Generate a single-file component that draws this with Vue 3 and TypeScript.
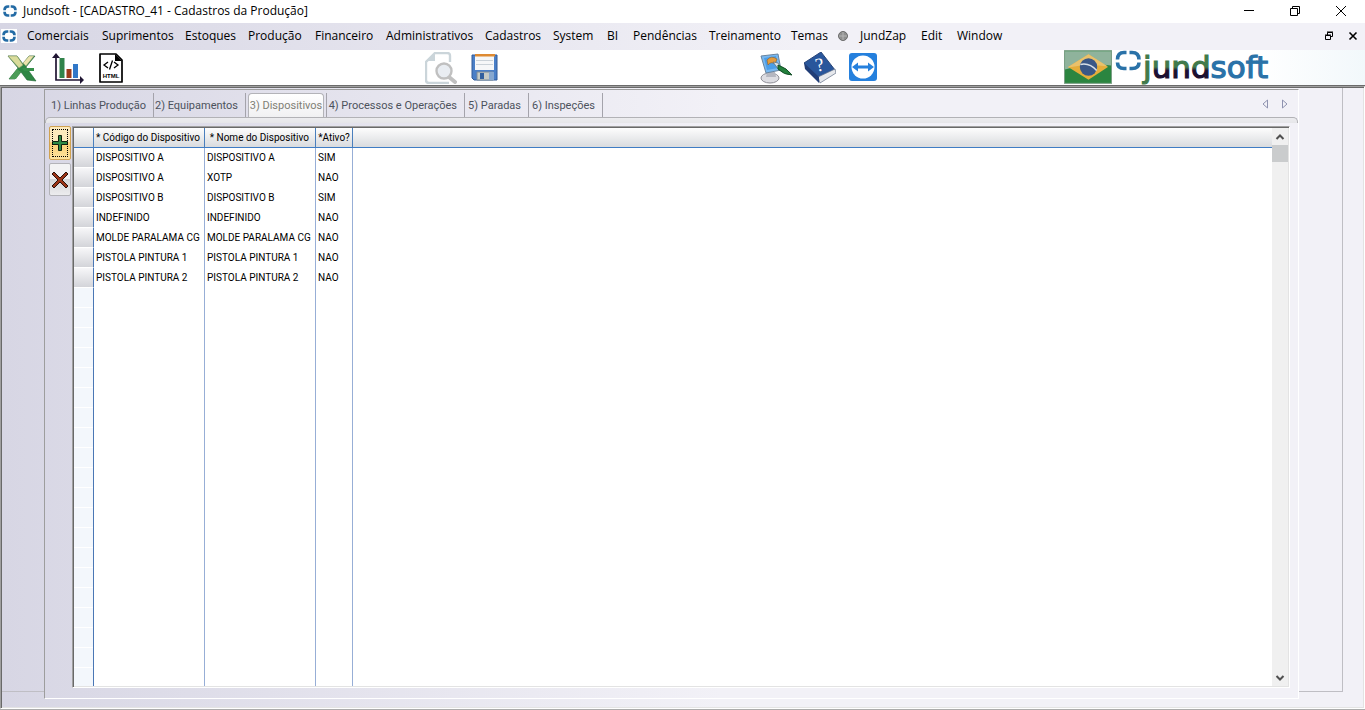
<script setup lang="ts">
import { ref } from 'vue'

interface Device { code: string; name: string; active: string }

const menus: string[] = ['Comerciais', 'Suprimentos', 'Estoques', 'Produção', 'Financeiro', 'Administrativos', 'Cadastros', 'System', 'BI', 'Pendências', 'Treinamento', 'Temas', 'JundZap', 'Edit', 'Window']
const tabs: string[] = ['1) Linhas Produção', '2) Equipamentos', '3) Dispositivos', '4) Processos e Operações', '5) Paradas', '6) Inspeções']
const selected = ref(2)
const devices = ref<Device[]>([
  { code: 'DISPOSITIVO A', name: 'DISPOSITIVO A', active: 'SIM' },
  { code: 'DISPOSITIVO A', name: 'XOTP', active: 'NAO' },
  { code: 'DISPOSITIVO B', name: 'DISPOSITIVO B', active: 'SIM' },
  { code: 'INDEFINIDO', name: 'INDEFINIDO', active: 'NAO' },
  { code: 'MOLDE PARALAMA CG', name: 'MOLDE PARALAMA CG', active: 'NAO' },
  { code: 'PISTOLA PINTURA 1', name: 'PISTOLA PINTURA 1', active: 'NAO' },
  { code: 'PISTOLA PINTURA 2', name: 'PISTOLA PINTURA 2', active: 'NAO' },
])
</script>

<template>
  <div class="window">
    <header class="titlebar">
      <svg class="app-icon" viewBox="0 0 16 14" aria-hidden="true">
        <path d="M7.300 2.500H6Q2.500 2.500 2.500 6.300M8.700 2.500H10q3.500 0 3.500 3.800M2.500 7.700q0 3.800 3.500 3.800h1.300M8.700 11.500H10q3.500 0 3.500-3.800" />
      </svg>
      <h1>Jundsoft - [CADASTRO_41 - Cadastros da Produção]</h1>
      <div class="win-buttons">
        <button aria-label="Minimizar"><svg viewBox="0 0 12 12"><path d="M1 5.500h10" /></svg></button>
        <button aria-label="Restaurar"><svg viewBox="0 0 12 12"><path d="M1.500 3.500h7v7h-7zM3.500 3.500v-2h7v7h-2" /></svg></button>
        <button aria-label="Fechar"><svg viewBox="0 0 12 12"><path d="M1 1l10 10M11 1L1 11" /></svg></button>
      </div>
    </header>

    <nav class="menubar" aria-label="Principal">
      <span class="menu-icon"><svg class="app-icon" viewBox="0 0 16 14" aria-hidden="true">
        <path d="M7.300 2.500H6Q2.500 2.500 2.500 6.300M8.700 2.500H10q3.500 0 3.500 3.800M2.500 7.700q0 3.800 3.500 3.800h1.300M8.700 11.500H10q3.500 0 3.500-3.800" />
      </svg></span>
      <div class="menu-items">
        <button v-for="m in menus" :key="m">
          <svg v-if="m === 'JundZap'" class="status" viewBox="0 0 10 10" aria-hidden="true"><circle cx="5" cy="5" r="4.500" fill="#8f8f8f" stroke="#6c6c6c" /><path d="M5 1v8M1 5h8" stroke="#b5b5b5" /></svg>{{ m }}
        </button>
      </div>
      <div class="mdi-buttons">
        <button aria-label="Restaurar janela"><svg viewBox="0 0 10 10"><path d="M1.500 4.500h5v4h-5zM3.500 4V1.500h5v4H7M1 4h6M3 1h6" /></svg></button>
        <button aria-label="Fechar janela"><svg viewBox="0 0 10 10"><path d="M1.500 1.500l7 7M8.500 1.500l-7 7" stroke-width="1.600" /></svg></button>
      </div>
    </nav>

    <div class="toolbar">
      <div class="tools files">
        <button aria-label="Exportar para Excel">
          <svg viewBox="0 0 32 32"><path d="M2 4h9l6 8 6-8h6l-9 11 10 14-9-1-6-8-6 7H3l9-11z" fill="#2e8744" stroke="#1d6232" stroke-width=".6" /><path d="M2 4h9l6 9-4 3z" fill="#d9dc9b" stroke="#87996a" stroke-width=".6" /><path d="M23 4h5l-8 10-3-3z" fill="#ebe3ac" stroke="#87996a" stroke-width=".5" /><path d="M3 27l8-10 4 3-5 7z" fill="#4e9d59" /><path d="M16 16h12v3H18z" fill="#35904a" /></svg>
        </button>
        <button aria-label="Gráfico">
          <svg viewBox="0 0 32 32"><path d="M7.500 6h5v20h-5z" fill="#30834a" /><path d="M14.500 17h5v9h-5z" fill="#9b3a1a" /><path d="M21 12h5v14h-5z" fill="#3178c8" /><path d="M4 4v24h25" fill="none" stroke="#201633" stroke-width="1.700" /><path d="M4 1L0 6h8zM32 28l-4-4v8z" fill="#201633" /></svg>
        </button>
        <button aria-label="Exportar para HTML">
          <svg viewBox="0 0 32 32"><path d="M5 2h16l6 6v22H5z" fill="#fff" stroke="#000" stroke-width="1.700" stroke-linejoin="round" /><path d="M20 2v7h7z" fill="#000" /><path d="M13 10l-4 3 4 3M19 10l4 3-4 3M17.500 8.500l-3 9" fill="none" stroke="#000" stroke-width="1.300" /><text x="16" y="26" text-anchor="middle" font-family="Liberation Sans, sans-serif" font-size="6" font-weight="700">HTML</text></svg>
        </button>
      </div>
      <div class="tools records">
        <button aria-label="Visualizar">
          <svg viewBox="0 0 32 32" fill="none"><path d="M25 10V4q0-3-3-3H10L1 10v18q0 3 3 3h20" stroke="#cbd5da" stroke-width="2.400" /><path d="M10 1v8H1z" fill="#cbd5da" /><path d="M24 25l6 5" stroke="#c0c0c0" stroke-width="4" stroke-linecap="round" /><circle cx="19" cy="19" r="7.500" fill="#e9edf2" stroke="#c0c0c0" stroke-width="2.400" /></svg>
        </button>
        <button aria-label="Salvar">
          <svg viewBox="0 0 32 32"><path d="M3 3h25v25H5l-2-2z" fill="#4a7fc7" stroke="#315a98" /><path d="M6 3h19v15H6z" fill="#f6f7f8" /><path d="M6 2h20v2.500H6z" fill="#de8a32" /><path d="M7 8.500h17M7 12.500h17" stroke="#cbd2d8" /><path d="M8 20h16v8H8z" fill="#c6cbc6" stroke="#7b8b9a" /><path d="M11 21h4v6h-4z" fill="#315f9e" /><path d="M20 20h5v8h-5z" fill="#86a7cf" /></svg>
        </button>
      </div>
      <div class="tools help">
        <button aria-label="Aparência">
          <svg viewBox="0 0 32 32"><ellipse cx="10" cy="26" rx="9" ry="5" fill="#dddde2" stroke="#8e8e96" /><path d="M7 20h8l1 5H6z" fill="#b5b7c0" /><path d="M1 4l17-2 3 16-15 3z" fill="#79b8f0" stroke="#68849f" /><path d="M4 6l12-2 2 12-11 2z" fill="#4b9ee9" /><path d="M7 8q4-5 10-1l-2 5q-4-3-7 1z" fill="#e39b3d" stroke="#8f622c" stroke-width=".6" /><path d="M13 10l5 1 4 6-3 1z" fill="#dfe6ec" stroke="#5d6c78" stroke-width=".7" /><path d="M18 13q9 3 14 10-8 0-14-6z" fill="#23803c" stroke="#145028" /></svg>
        </button>
        <button aria-label="Ajuda">
          <svg viewBox="0 0 32 32"><path d="M0 11L17 0l14 18-15 10z" fill="#29569b" stroke="#284579" /><path d="M14 25l17-8 1 4-16 10z" fill="#e6e8ec" stroke="#637087" stroke-width=".7" /><path d="M0 11l1 6 14 14v-6z" fill="#203d77" /><text x="16" y="19" text-anchor="middle" fill="#fff" font-family="Liberation Serif, serif" font-size="19" transform="rotate(-12 16 15)">?</text></svg>
        </button>
        <button aria-label="Suporte remoto">
          <svg viewBox="0 0 32 32"><rect x="1" y="1" width="28" height="28" rx="3" fill="#2580dd" /><circle cx="15" cy="15" r="11.500" fill="#fff" /><path d="M4 15l6-4.500v3h10v-3l6 4.500-6 4.500v-3H10v3z" fill="#2580dd" /></svg>
        </button>
      </div>
      <div class="brand">
        <svg class="flag" viewBox="0 0 47 33" role="img" aria-label="Brasil"><rect x=".5" y=".5" width="46" height="32" fill="#2b8540" stroke="#7b9f85" /><path d="M1 1h45v14q-20-3-45 4z" fill="#8fb39c" /><path d="M4 16.500L24 4l19 12.500L24 29z" fill="#e5ad3a" /><path d="M4 16.500L24 4l19 12q-20-3-39 1z" fill="#e9c16c" /><circle cx="24" cy="16.500" r="8.500" fill="#3a5786" /><path d="M16 14q9-2 16 6" fill="none" stroke="#d8dfe7" stroke-width="1.600" /></svg>
        <svg class="logo" viewBox="0 0 158 35" role="img" aria-label="jundsoft">
          <defs>
            <linearGradient id="inkfade" x1="0" y1="0" x2="0" y2="1"><stop offset=".5" stop-color="#417a4b" /><stop offset=".6" stop-color="#1c1030" /></linearGradient>
          </defs>
          <path d="M11.500 2.500H9Q2.500 2.500 2.500 9.500M14.500 2.500H17q7 0 7 7M2.500 12.500q0 6 6.500 6h2.500M14.500 18.500H17q7 0 7-6" fill="none" stroke="#2a72a8" stroke-width="3.600" />
          <g font-family="DejaVu Sans, sans-serif" font-size="31" stroke-width="1.200"><text x="28" y="28"><tspan fill="#417a4b" stroke="#417a4b">j</tspan><tspan fill="url(#inkfade)" stroke="url(#inkfade)">und</tspan><tspan fill="#2a72a8" stroke="#2a72a8">soft</tspan></text></g>
        </svg>
      </div>
    </div>

    <main class="workspace">
      <div class="gutter left"></div>
      <section class="panel">
        <div class="tabbar">
          <div class="tabs" role="tablist">
            <button v-for="(t, i) in tabs" :key="t" role="tab" :aria-selected="selected === i" :class="{ active: selected === i }" @click="selected = i"><span>{{ t }}</span></button>
          </div>
          <div class="tab-arrows">
            <button aria-label="Aba anterior"><svg viewBox="0 0 8 10"><path d="M6.500 1v8L2 5z" /></svg></button>
            <button aria-label="Próxima aba"><svg viewBox="0 0 8 10"><path d="M1.500 1v8L6 5z" /></svg></button>
          </div>
        </div>
        <div class="tab-edge"></div>
        <div class="content">
          <div class="actions">
            <button class="add" aria-label="Adicionar"><svg viewBox="0 0 18 18"><path d="M7.500 1.500h3v6h6v3h-6v6h-3v-6h-6v-3h6z" fill="#2f8a45" stroke="#10230f" /></svg></button>
            <button class="remove" aria-label="Excluir"><svg viewBox="0 0 18 18"><path d="M3 1l6 6 6-6 2 2-6 6 6 6-2 2-6-6-6 6-2-2 6-6-6-6z" fill="#9c3518" stroke="#2b120c" /></svg></button>
          </div>
          <div class="grid-box">
            <table>
              <colgroup><col class="c-sel"><col class="c-text"><col class="c-text"><col class="c-flag"><col></colgroup>
              <thead>
                <tr><th></th><th>* Código do Dispositivo</th><th>* Nome do Dispositivo</th><th>*Ativo?</th><th></th></tr>
              </thead>
              <tbody>
                <tr v-for="(d, i) in devices" :key="i"><td class="sel"></td><td>{{ d.code }}</td><td>{{ d.name }}</td><td>{{ d.active }}</td><td></td></tr>
                <tr class="rest"><td></td><td></td><td></td><td></td><td></td></tr>
              </tbody>
            </table>
            <div class="scrollbar">
              <button aria-label="Rolar para cima"><svg viewBox="0 0 10 8"><path d="M1.500 6L5 2.500 8.500 6" /></svg></button>
              <div class="thumb"></div>
              <button class="down" aria-label="Rolar para baixo"><svg viewBox="0 0 10 8"><path d="M1.500 2L5 5.500 8.500 2" /></svg></button>
            </div>
          </div>
        </div>
      </section>
      <div class="gutter right"></div>
    </main>
  </div>
</template>

<style>
body { background: #fff; }
</style>

<style scoped>
* { box-sizing: border-box; }
button { margin: 0; padding: 0; border: 0; background: none; color: inherit; font: inherit; white-space: nowrap; display: flex; align-items: center; justify-content: center; }
svg { display: block; flex: none; }
.window { display: flex; flex-direction: column; height: 100vh; border-bottom: 1px solid #ababab; font: 12px/16px "Open Sans", sans-serif; color: #000; }
.app-icon { width: 16px; height: 14px; }
.app-icon path { fill: none; stroke: #236ba5; stroke-width: 2.6; }

.titlebar { display: flex; align-items: center; height: 23px; padding: 0 1px 1px 2px; flex: none; }
.titlebar h1 { margin: 0 0 0 5px; font-size: 12px; font-weight: 400; flex: 1; }
.win-buttons { display: flex; }
.win-buttons button { width: 46px; height: 22px; }
.win-buttons svg { width: 12px; height: 12px; fill: none; stroke: #000; }

.menubar { display: flex; align-items: center; height: 27px; padding-bottom: 2px; flex: none; background: linear-gradient(90deg, #d7d6e4, #f2f1f7 800px); }
.menu-icon { width: 19px; padding-left: 1px; }
.menu-icon svg { background: #fff; }
.menu-items { display: grid; grid-template-columns: 75px 83px 63px 67px 71px 99px 68px 54px 26px 76px 82px 47px 83px 36px 60px; flex: 1; }
.menu-items button { justify-content: flex-start; padding-left: 8px; height: 24px; }
.status { width: 10px; height: 10px; margin-right: 12px; }
.mdi-buttons { display: flex; }
.mdi-buttons button { width: 24px; height: 24px; }
.mdi-buttons svg { width: 10px; height: 10px; fill: none; stroke: #000; }

.toolbar { display: grid; grid-template-columns: 425px 335px 1fr auto; height: 36px; flex: none; padding-right: 92px; border-bottom: 1px solid #6b6b6b; background: linear-gradient(90deg, #fff 92%, #f2f8fb); }
.tools { display: flex; align-items: center; }
.tools button, .tools svg { width: 32px; height: 32px; }
.files { padding-left: 6px; gap: 14px; }
.files button:last-child { margin-left: -3px; }
.records, .help { gap: 12px; }
.brand { display: flex; align-items: flex-start; gap: 3px; }
.flag { width: 48px; height: 34px; }
.logo { width: 158px; height: 35px; }

.workspace { display: flex; flex: 1; min-height: 0; padding: 1px; border: 1px solid; border-color: #a0a0a0 #fff #fff #a0a0a0; box-shadow: inset 1px 1px #696969, inset -1px -1px #e3e3e3; background: linear-gradient(90deg, #d7d6e4, #f2f1f7 720px); }
.gutter { margin-bottom: 15px; border-bottom: 1px solid #bfbec4; flex: none; }
.left { width: 42px; }
.right { width: 44px; margin-right: 20px; border-right: 1px solid #bfbec4; }
.panel { display: flex; flex-direction: column; flex: 1; min-width: 0; margin: 1px 0 8px; border: 1px solid; border-color: #9d9d9d #fff #fff #9d9d9d; font-family: Roboto, "Liberation Sans", sans-serif; }

.tabbar { display: flex; justify-content: space-between; height: 27px; flex: none; font-size: 11px; color: #4c525c; }
.tabs { display: grid; grid-template-columns: 109px 92px 81px 138px 64px 74px; padding-top: 3px; }
.tabs button { border-right: 1px solid #a4a3ab; justify-content: flex-end; padding-right: 7px; }
.tabs .active { padding: 0 2px; color: #7f8076; }
.tabs .active span { flex: 1; line-height: 24px; border: 1px solid #b3b3b8; border-bottom: 0; border-radius: 4px 4px 0 0; background: linear-gradient(#fff, #f0f0f2); }
.tab-arrows { display: flex; gap: 4px; padding-right: 5px; }
.tab-arrows button { width: 16px; }
.tab-arrows svg { width: 8px; height: 10px; fill: none; stroke: #8f93b0; }
.tab-edge { height: 6px; flex: none; border: 1px solid #b2b2b6; border-width: 1px 1px 0; border-radius: 5px 5px 0 0; background: linear-gradient(#ececef, #e6e6e9); }

.content { display: flex; flex: 1; min-height: 0; padding: 3px 8px 10px 4px; }
.actions { display: flex; flex-direction: column; gap: 3px; width: 23px; }
.actions button { width: 22px; height: 33px; border: 1px solid #b3b3b8; border-radius: 2px; background: linear-gradient(#f3f3f4 50%, #d5d6d9 50%, #ececee); }
.actions svg { width: 18px; height: 18px; }
.actions .add { height: 34px; border-color: #d0a250; background: linear-gradient(#fdebbd 45%, #fbcf73 50%, #fde3a0); outline: 1px dotted #000; outline-offset: -4px; }

.grid-box { display: grid; grid-template-columns: 1fr 16px; flex: 1; min-width: 0; padding: 1px; border: 1px solid; border-color: #a0a0a0 #fff #fff #a0a0a0; box-shadow: inset 1px 1px #696969, inset -1px -1px #e3e3e3; background: #fff; }
table { width: 100%; height: 100%; border-collapse: separate; border-spacing: 0; table-layout: fixed; font-size: 10px; line-height: 14px; }
.c-sel { width: 20px; }
.c-text { width: 111px; }
.c-flag { width: 37px; }
th, td { height: 20px; padding: 0 2px; border-right: 1px solid #97aed6; white-space: nowrap; text-align: left; vertical-align: middle; }
th { font-weight: 400; text-align: center; border-right-color: #4a7fbd; border-bottom: 1px solid #3f7cc4; background: linear-gradient(#fdfdfd, #d9dbde); }
th:nth-child(2), th:nth-child(3) { text-align: right; padding-right: 6px; }
th:last-child, td:last-child { border-right: 0; }
td:first-child { border-right-color: #4a77b5; }
.sel { border-bottom: 1px solid #fff; background: linear-gradient(#f7f7f9, #d3d4d9); }
.rest td { height: auto; }
.rest td:first-child { background: repeating-linear-gradient(#f3f7fc 0 19px, #fff 19px 20px); }

.scrollbar { display: flex; flex-direction: column; background: #f0f0f0; }
.scrollbar button { height: 17px; }
.scrollbar svg { width: 10px; height: 8px; fill: none; stroke: #505050; stroke-width: 2; }
.thumb { height: 17px; background: #cacccd; }
.down { margin-top: auto; }
</style>
